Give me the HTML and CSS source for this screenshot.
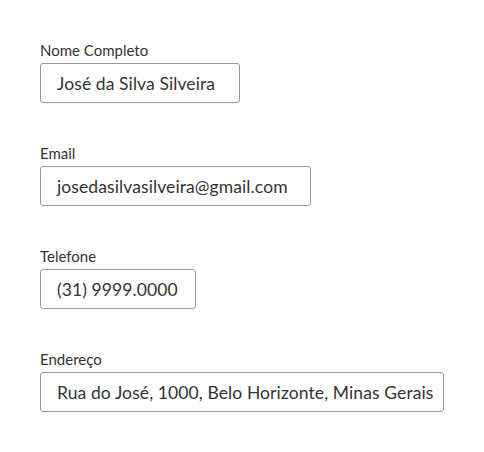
FILE: index.html
```html
<!DOCTYPE html>
<html lang="pt-BR">
<head>
<meta charset="utf-8">
<link rel="stylesheet" href="styles.css">
</head>
<body>
<form class="form">
  <div class="field">
    <label class="label">Nome Completo</label>
    <div class="input w-nome">José da Silva Silveira</div>
  </div>
  <div class="field">
    <label class="label">Email</label>
    <div class="input w-email">josedasilvasilveira@gmail.com</div>
  </div>
  <div class="field">
    <label class="label">Telefone</label>
    <div class="input w-tel">(31) 9999.0000</div>
  </div>
  <div class="field">
    <label class="label">Endereço</label>
    <div class="input w-end">Rua do José, 1000, Belo Horizonte, Minas Gerais</div>
  </div>
</form>
</body>
</html>
```
FILE: styles.css
```css
html, body {
  margin: 0;
  padding: 0;
  background: #ffffff;
}
body {
  font-family: Lato, "Open Sans", sans-serif;
  color: #333333;
}
.form {
  display: flex;
  flex-direction: column;
  gap: 42px;
  padding: 42px 40px 0 40px;
}
.field {
  display: flex;
  flex-direction: column;
  align-items: flex-start;
  gap: 4px;
}
.label {
  font-size: 15px;
  line-height: 17px;
  color: #333333;
}
.input {
  box-sizing: border-box;
  display: flex;
  align-items: center;
  height: 40px;
  padding: 0 0 0 16px;
  border: 1px solid #9a9a9a;
  border-radius: 3px;
  font-size: 17.5px;
  letter-spacing: 0.1px;
  white-space: nowrap;
  color: #333333;
  background: #ffffff;
}
.w-nome { width: 200px; }
.w-email { width: 271px; }
.w-tel { width: 156px; }
.w-end { width: 404px; }
```
